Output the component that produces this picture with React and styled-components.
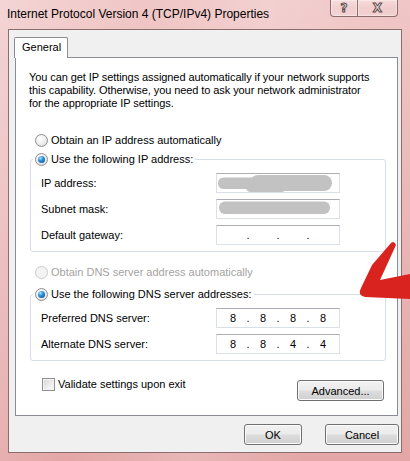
import React from 'react';
import styled, { createGlobalStyle } from 'styled-components';

const GlobalStyle = createGlobalStyle`
  html, body {
    margin: 0;
    padding: 0;
    background: #ffffff;
  }
  body {
    font-family: "Liberation Sans", Arial, sans-serif;
    font-size: 11px;
    color: #000;
  }
`;

const Window = styled.div`
  position: relative;
  width: 410px;
  height: 461px;
  box-sizing: border-box;
  display: flex;
  flex-direction: column;
  overflow: hidden;
  background:
    linear-gradient(100deg, rgba(255,255,255,0.25) 0%, rgba(255,255,255,0) 30%, rgba(255,255,255,0.18) 55%, rgba(255,255,255,0) 80%),
    linear-gradient(180deg, #f0c6c6 0%, #e9b2b2 60%, #e4a6a6 100%);
`;

const TitleBar = styled.div`
  height: 29px;
  flex-shrink: 0;
  display: flex;
  align-items: flex-start;
  padding-left: 7px;
`;

const TitleText = styled.div`
  margin-top: 6px;
  line-height: 16px;
  font-size: 12px;
  color: #000;
`;

const CaptionButtons = styled.div`
  margin-left: auto;
  margin-right: 12px;
  display: flex;
`;

const CaptionButton = styled.div`
  width: ${p => p.$width}px;
  height: 17px;
  box-sizing: border-box;
  border: 1px solid #8c6c6c;
  border-top: none;
  border-left-width: ${p => (p.$first ? 1 : 0)}px;
  border-radius: ${p => (p.$first ? '0 0 0 4px' : '0 0 4px 0')};
  background: linear-gradient(180deg, rgba(255,255,255,0.35), rgba(255,255,255,0.1) 50%, rgba(255,255,255,0.2));
  box-shadow: inset 0 0 0 1px rgba(255,255,255,0.35);
  display: flex;
  align-items: center;
  justify-content: center;
  font-family: "DejaVu Sans", sans-serif;
  font-weight: bold;
  font-size: 12px;
  line-height: 14px;
  color: #f6eaea;
  -webkit-text-stroke: 1px #5b4a4a;
`;

const Client = styled.div`
  flex: 1;
  margin: 0 8px 8px 8px;
  background: #f0f0f0;
  border: 1px solid #8a6e6e;
  padding: 7px 3px 0 6px;
  display: flex;
  flex-direction: column;
`;

const TabStrip = styled.div`
  display: flex;
  height: 20px;
`;

const Tab = styled.div`
  position: relative;
  z-index: 1;
  margin-left: -1px;
  width: 54px;
  height: 21px;
  box-sizing: border-box;
  background: #fff;
  border: 1px solid #898c95;
  border-bottom: none;
  border-radius: 2px 2px 0 0;
  padding-left: 7px;
  line-height: 19px;
`;

const Panel = styled.div`
  height: 359px;
  box-sizing: border-box;
  background: #fff;
  border: 1px solid #898c95;
  padding: 13px 11px 0 13px;
  display: flex;
  flex-direction: column;
`;

const Intro = styled.p`
  margin: 0;
  line-height: 13px;
  white-space: nowrap;
  letter-spacing: -0.08px;
`;

const RadioRow = styled.label`
  display: flex;
  align-items: center;
  gap: 3px;
  height: 16px;
  margin-top: ${p => p.$top || 0}px;
  margin-left: ${p => p.$left || 0}px;
  color: ${p => (p.$disabled ? '#a3a3a3' : '#000')};
  line-height: 16px;
  white-space: nowrap;
`;

const Radio = styled.span`
  width: 13px;
  height: 13px;
  box-sizing: border-box;
  border-radius: 50%;
  flex-shrink: 0;
  display: flex;
  align-items: center;
  justify-content: center;
  border: 1px solid ${p => (p.$disabled ? '#cacaca' : '#8e8f8f')};
  background: ${p =>
    p.$disabled
      ? '#f4f4f4'
      : 'radial-gradient(circle at 40% 35%, #ffffff 0%, #ececec 55%, #cfcfcf 100%)'};
  &::after {
    content: '';
    display: ${p => (p.$checked ? 'block' : 'none')};
    width: 7px;
    height: 7px;
    border-radius: 50%;
    background: radial-gradient(circle at 35% 30%, #a8e6ff 0%, #2c8fd8 40%, #0b4782 100%);
  }
`;

const Group = styled.fieldset`
  margin: ${p => p.$top || 0}px 0 0 1px;
  padding: 6px 0 6px 2px;
  border: 1px solid #d5dfe5;
  border-radius: 3px;
  min-inline-size: 0;
`;

const Legend = styled.legend`
  padding: 0 2px;
`;

const Fields = styled.div`
  margin-left: 8px;
  display: grid;
  grid-template-columns: 175px 124px;
  row-gap: 6px;
  align-items: center;
`;

const FieldLabel = styled.span`
  line-height: 16px;
`;

const IpBox = styled.div`
  position: relative;
  width: 124px;
  height: 20px;
  box-sizing: border-box;
  border: 1px solid #dbdfe6;
  border-top-color: #abadb3;
  background: #fff;
  display: flex;
  align-items: center;
  padding-left: 3px;
`;

const Octet = styled.span`
  width: 26px;
  text-align: center;
  line-height: 16px;
`;

const Dot = styled.span`
  width: 4px;
  text-align: center;
  line-height: 16px;
`;

const Redaction = styled.svg`
  position: absolute;
  left: -1px;
  top: -1px;
  width: 124px;
  height: 20px;
`;

const BottomRow = styled.div`
  margin-top: 17px;
  display: flex;
  align-items: flex-start;
  justify-content: space-between;
  padding: 0 2px 0 13px;
`;

const CheckRow = styled.label`
  display: flex;
  align-items: center;
  gap: 3px;
  height: 13px;
  line-height: 13px;
`;

const Checkbox = styled.span`
  width: 13px;
  height: 13px;
  box-sizing: border-box;
  border: 1px solid #8f8f8f;
  background: linear-gradient(135deg, #d6d6d6 0%, #eeeeee 60%, #fafafa 100%);
  box-shadow: inset 0 0 0 1px #f4f4f4;
`;

const Button = styled.div`
  width: ${p => p.$width}px;
  height: 21px;
  margin-top: ${p => p.$top || 0}px;
  box-sizing: border-box;
  border: 1px solid #707070;
  border-radius: 3px;
  background: linear-gradient(180deg, #f2f2f2 0%, #ebebeb 48%, #dddddd 52%, #cfcfcf 100%);
  box-shadow: inset 0 0 0 1px #fbfbfb;
  display: flex;
  align-items: center;
  justify-content: center;
  line-height: 16px;
`;

const Footer = styled.div`
  margin-top: 8px;
  margin-right: -1px;
  display: flex;
  justify-content: flex-end;
  gap: 23px;
`;

const Arrow = styled.svg`
  position: absolute;
  left: 355px;
  top: 238px;
  width: 55px;
  height: 68px;
`;

const IpField = ({ value, children }) => {
  const parts = value ? value.split('.') : ['', '', '', ''];
  return (
    <IpBox>
      {parts.map((p, i) => (
        <React.Fragment key={i}>
          {i > 0 && <Dot>.</Dot>}
          <Octet>{p}</Octet>
        </React.Fragment>
      ))}
      {children}
    </IpBox>
  );
};

export default function App() {
  return (
    <Window>
      <GlobalStyle />
      <TitleBar>
        <TitleText>Internet Protocol Version 4 (TCP/IPv4) Properties</TitleText>
        <CaptionButtons>
          <CaptionButton $width={28} $first>?</CaptionButton>
          <CaptionButton $width={40}>X</CaptionButton>
        </CaptionButtons>
      </TitleBar>
      <Client>
        <TabStrip>
          <Tab>General</Tab>
        </TabStrip>
        <Panel>
          <Intro>
            You can get IP settings assigned automatically if your network supports
            <br />
            this capability. Otherwise, you need to ask your network administrator
            <br />
            for the appropriate IP settings.
          </Intro>

          <RadioRow $top={22} $left={6}>
            <Radio />
            Obtain an IP address automatically
          </RadioRow>

          <Group $top={3}>
            <Legend>
              <RadioRow>
                <Radio $checked />
                Use the following IP address:
              </RadioRow>
            </Legend>
            <Fields>
              <FieldLabel>IP address:</FieldLabel>
              <IpField value="0.0.0.0">
                <Redaction viewBox="0 0 124 20">
                  <rect x="2" y="4.5" width="46" height="11.5" rx="5.5" fill="#c2c2c2" />
                  <rect x="34" y="2" width="82" height="16" rx="8" fill="#c2c2c2" />
                  <rect x="30" y="10" width="40" height="9" rx="4.5" fill="#c2c2c2" />
                </Redaction>
              </IpField>
              <FieldLabel>Subnet mask:</FieldLabel>
              <IpField>
                <Redaction viewBox="0 0 124 20">
                  <rect x="3" y="2.5" width="111" height="12.5" rx="6" fill="#c2c2c2" />
                </Redaction>
              </IpField>
              <FieldLabel>Default gateway:</FieldLabel>
              <IpField />
            </Fields>
          </Group>

          <RadioRow $top={12} $left={6} $disabled>
            <Radio $disabled />
            Obtain DNS server address automatically
          </RadioRow>

          <Group $top={6}>
            <Legend>
              <RadioRow>
                <Radio $checked />
                Use the following DNS server addresses:
              </RadioRow>
            </Legend>
            <Fields>
              <FieldLabel>Preferred DNS server:</FieldLabel>
              <IpField value="8.8.8.8" />
              <FieldLabel>Alternate DNS server:</FieldLabel>
              <IpField value="8.8.4.4" />
            </Fields>
          </Group>

          <BottomRow>
            <CheckRow>
              <Checkbox />
              Validate settings upon exit
            </CheckRow>
            <Button $width={87} $top={2}>Advanced...</Button>
          </BottomRow>
        </Panel>
        <Footer>
          <Button $width={58}>OK</Button>
          <Button $width={74}>Cancel</Button>
        </Footer>
      </Client>
      <Arrow viewBox="0 0 55 68">
        <path
          d="M6 50 L17 27 L36 5 Q39 2 41 7 L25 42 L55 36 L55 61 L10 59 Q2 57 6 50 Z"
          fill="#d8231f"
        />
      </Arrow>
    </Window>
  );
}
